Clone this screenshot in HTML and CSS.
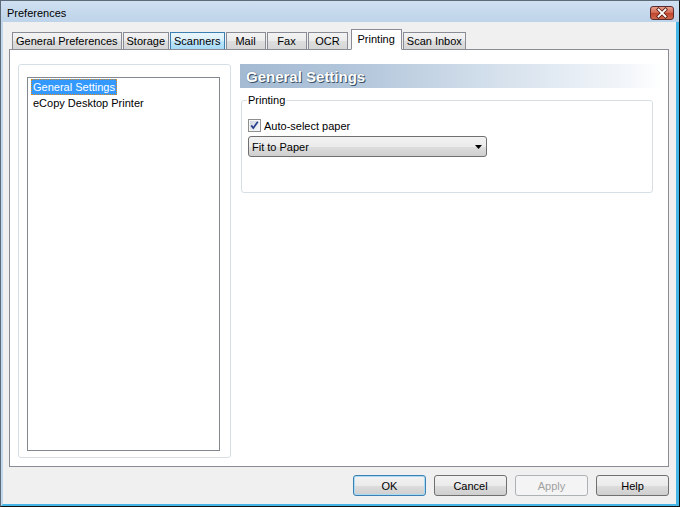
FILE: index.html
```html
<!DOCTYPE html>
<html>
<head>
<meta charset="utf-8">
<link rel="stylesheet" href="styles.css">
</head>
<body>
<div class="window">
  <div class="titlebar">
    <span class="title">Preferences</span>
    <div class="close">
      <svg width="24" height="14" viewBox="0 0 24 14">
        <path d="M8.5 3.5 L15.5 10.5 M15.5 3.5 L8.5 10.5" stroke="#5a1e14" stroke-width="3.4" stroke-linecap="square"/>
        <path d="M8.5 3.5 L15.5 10.5 M15.5 3.5 L8.5 10.5" stroke="#ffffff" stroke-width="1.8" stroke-linecap="square"/>
      </svg>
    </div>
  </div>
  <div class="body">
    <div class="tabs">
      <div class="tab">General Preferences</div>
      <div class="tab">Storage</div>
      <div class="tab hover">Scanners</div>
      <div class="tab">Mail</div>
      <div class="tab">Fax</div>
      <div class="tab">OCR</div>
      <div class="tab selected">Printing</div>
      <div class="tab">Scan Inbox</div>
    </div>
    <div class="panel">
      <div class="left-group">
        <div class="listbox">
          <div class="item"><span class="sel">General Settings</span></div>
          <div class="item"><span class="plain">eCopy Desktop Printer</span></div>
        </div>
      </div>
      <div class="right">
        <div class="header">General Settings</div>
        <fieldset class="group">
          <legend>Printing</legend>
          <div class="check-row">
            <svg class="checkbox" width="13" height="13" viewBox="0 0 13 13">
              <defs>
                <linearGradient id="cb" x1="0" y1="0" x2="1" y2="1">
                  <stop offset="0" stop-color="#cfd6e0"/>
                  <stop offset="1" stop-color="#f6f7f9"/>
                </linearGradient>
              </defs>
              <rect x="0.5" y="0.5" width="12" height="12" fill="#f5f5f5" stroke="#8e8f8f"/>
              <rect x="2" y="2" width="9" height="9" fill="url(#cb)"/>
              <path d="M3.2 6.4 L5.3 9 L9.8 2.8" fill="none" stroke="#2a3f8e" stroke-width="1.7"/>
            </svg>
            <span>Auto-select paper</span>
          </div>
          <div class="combo">
            <span>Fit to Paper</span>
            <svg width="7" height="4" viewBox="0 0 7 4"><path d="M0 0 H7 L3.5 4 Z" fill="#000"/></svg>
          </div>
        </fieldset>
      </div>
    </div>
    <div class="buttons">
      <div class="btn default">OK</div>
      <div class="btn">Cancel</div>
      <div class="btn disabled">Apply</div>
      <div class="btn">Help</div>
    </div>
  </div>
</div>
</body>
</html>
```

FILE: styles.css
```css
html, body {
  margin: 0;
  padding: 0;
  background: #ffffff;
}

body {
  font-family: "Liberation Sans", Arial, sans-serif;
  font-size: 11px;
  color: #000;
}

.window {
  box-sizing: border-box;
  width: 680px;
  height: 507px;
  display: flex;
  flex-direction: column;
  border-left: 1px solid #5d6b78;
  border-top: 1px solid #5d6b78;
  border-right: 1px solid #111;
  border-bottom: 1px solid #111;
  background: linear-gradient(#cfe0f1, #bdd3e9 22px, #bdd3e9);
}

.titlebar {
  height: 21px;
  display: flex;
  align-items: center;
  justify-content: space-between;
  padding: 0 5px 0 6px;
  flex: none;
}

.title {
  font-size: 11px;
  margin-top: 3px;
}

.close {
  width: 24px;
  height: 14px;
  margin-top: 2px;
  border: 1px solid #5b2a2a;
  border-radius: 3px;
  box-sizing: border-box;
  background: linear-gradient(#e9a08f, #d0654e 50%, #c0432c 51%, #cf6a4e);
  display: flex;
  align-items: center;
  justify-content: center;
  overflow: hidden;
}

.close svg {
  flex: none;
}

.body {
  flex: 1;
  display: flex;
  flex-direction: column;
  background: #f0f0f0;
  border-left: 2px solid #c2d8ec;
  border-right: 3px solid #46b6e6;
  border-bottom: 2px solid #46b6e6;
  padding: 7px 7px 8px 6px;
  min-height: 0;
}

.tabs {
  display: flex;
  align-items: flex-end;
  gap: 1px;
  padding-left: 3px;
  height: 21px;
  margin-bottom: -1px;
  flex: none;
}

.tab {
  box-sizing: border-box;
  height: 18px;
  min-width: 40px;
  padding: 0 3px;
  border: 1px solid #898c95;
  background: linear-gradient(#f3f3f3, #ebebeb 50%, #dedede 51%, #d6d6d6);
  display: flex;
  align-items: center;
  justify-content: center;
  white-space: nowrap;
  line-height: 16px;
}

.tab.hover {
  border-color: #3c7fb1;
  background: linear-gradient(#eaf6fd, #d9f0fc 50%, #bee6fd 51%, #a7d9f5);
}

.tab.selected {
  height: 21px;
  padding: 0 6px 2px;
  margin: 0 0 0 2px;
  background: #ffffff;
  border-bottom-color: #ffffff;
  position: relative;
  z-index: 1;
}

.panel {
  flex: 1;
  min-height: 0;
  background: #ffffff;
  border: 1px solid #898c95;
  display: flex;
  gap: 9px;
  padding: 14px 5px 8px 8px;
}

.left-group {
  box-sizing: border-box;
  width: 213px;
  border: 1px solid #d5dfe5;
  border-radius: 3px;
  padding: 12px 10px 6px 8px;
  display: flex;
}

.listbox {
  flex: 1;
  border: 1px solid #828790;
  background: #fff;
  padding: 1px 3px;
}

.item {
  height: 16px;
  display: flex;
  align-items: center;
}

.item .sel {
  background: #3399ff;
  color: #fff;
  border: 1px dotted #e08a1e;
  padding: 0 1px;
  line-height: 14px;
}

.item .plain {
  padding: 0 2px;
  line-height: 14px;
}

.right {
  flex: 1;
  display: flex;
  flex-direction: column;
}

.header {
  height: 24px;
  display: flex;
  align-items: center;
  padding-left: 6px;
  font-size: 15px;
  font-weight: bold;
  color: #ffffff;
  text-shadow: 1px 1px 0 #3e5368, 0 0 1px #51677d;
  background: linear-gradient(90deg, #a3bad2 0%, #b5c8dc 30%, #d4e0ec 60%, #f1f5f9 90%, #ffffff 100%);
}

.group {
  margin: 6px 10px 0 1px;
  padding: 0 7px 35px 6px;
  border: 1px solid #d5dfe5;
  border-radius: 3px;
}

.group legend {
  padding: 0 1px;
  margin-left: -1px;
  line-height: 12px;
}

.check-row {
  display: flex;
  align-items: center;
  gap: 3px;
  margin-top: 12px;
  height: 15px;
}

.checkbox {
  flex: none;
}

.combo {
  box-sizing: border-box;
  width: 239px;
  height: 21px;
  margin-top: 3px;
  border: 1px solid #707070;
  border-radius: 3px;
  background: linear-gradient(#f2f2f2, #ebebeb 50%, #dddddd 51%, #cfcfcf);
  display: flex;
  align-items: center;
  justify-content: space-between;
  padding: 0 4px 0 3px;
}

.buttons {
  flex: none;
  display: flex;
  justify-content: flex-end;
  gap: 8px;
  margin-top: 8px;
}

.btn {
  box-sizing: border-box;
  width: 73px;
  height: 21px;
  border: 1px solid #707070;
  border-radius: 3px;
  background: linear-gradient(#f2f2f2, #ebebeb 50%, #dddddd 51%, #cfcfcf);
  display: flex;
  align-items: center;
  justify-content: center;
}

.btn.default {
  border-color: #3c7fb1;
  box-shadow: inset 0 0 0 1px #a9dbf6;
}

.btn.disabled {
  border-color: #adb2b5;
  background: #f4f4f4;
  color: #a0a0a0;
}
```
